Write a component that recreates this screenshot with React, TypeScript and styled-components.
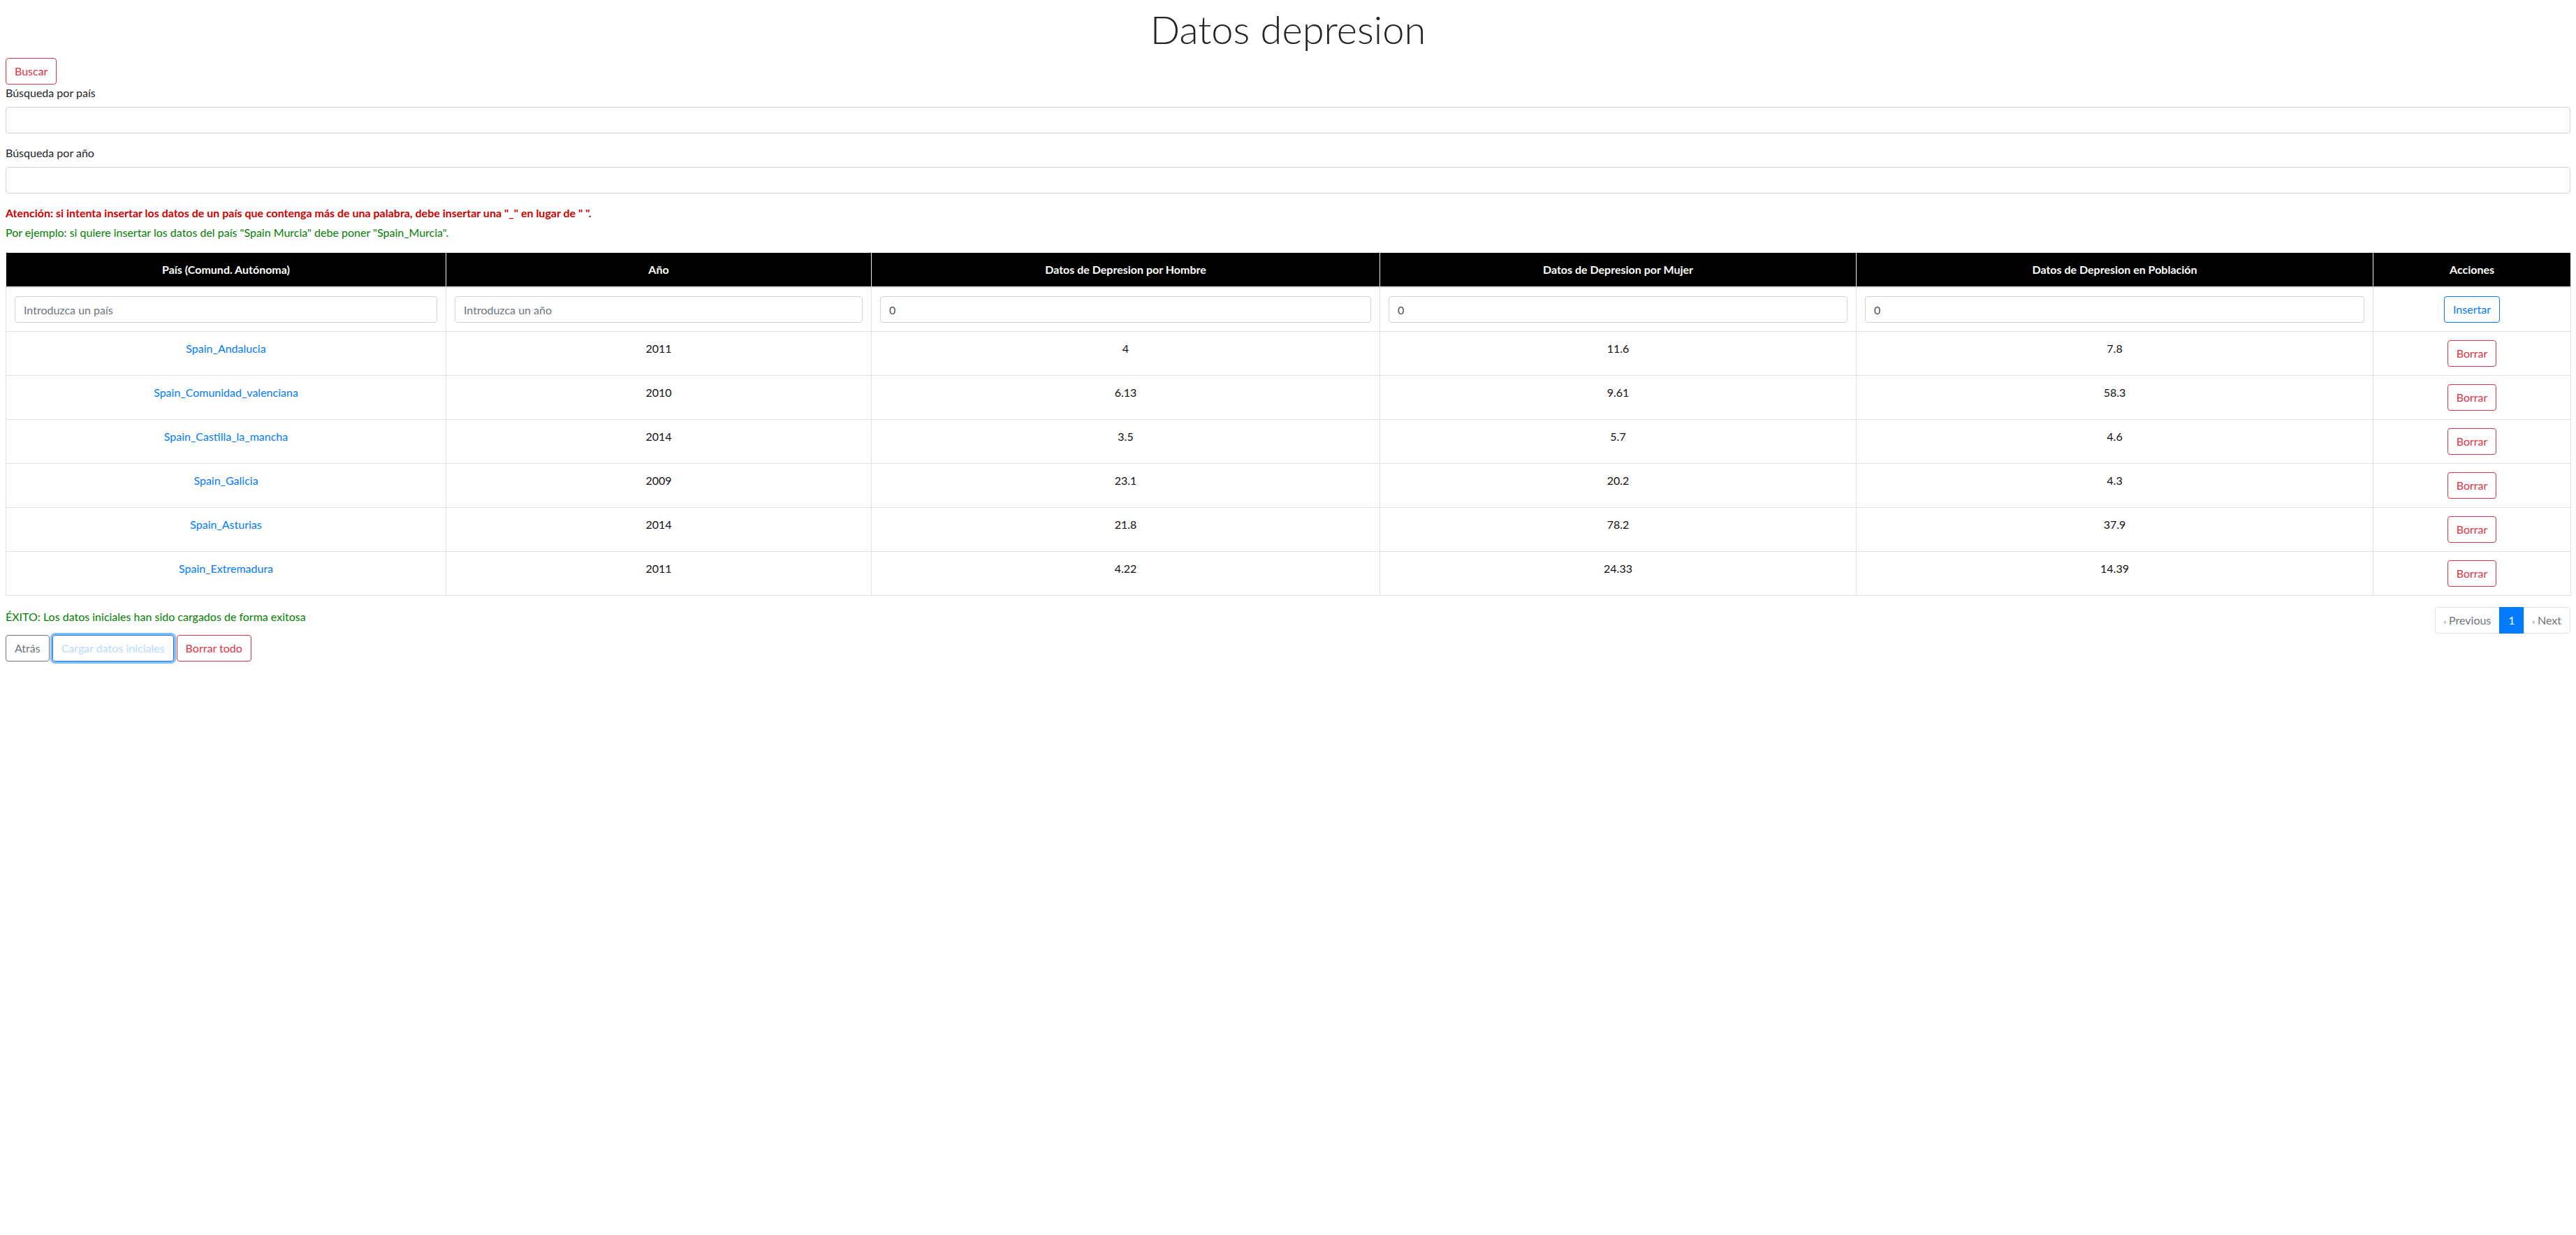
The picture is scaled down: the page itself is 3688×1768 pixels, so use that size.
import React from "react";
import styled, { createGlobalStyle, css } from "styled-components";

const FONT = `"Lato", "Segoe UI", "Liberation Sans", sans-serif`;

type Row = {
  country: string;
  year: number;
  men: string;
  women: string;
  population: string;
};

const ROWS: Row[] = [
  { country: "Spain_Andalucia", year: 2011, men: "4", women: "11.6", population: "7.8" },
  { country: "Spain_Comunidad_valenciana", year: 2010, men: "6.13", women: "9.61", population: "58.3" },
  { country: "Spain_Castilla_la_mancha", year: 2014, men: "3.5", women: "5.7", population: "4.6" },
  { country: "Spain_Galicia", year: 2009, men: "23.1", women: "20.2", population: "4.3" },
  { country: "Spain_Asturias", year: 2014, men: "21.8", women: "78.2", population: "37.9" },
  { country: "Spain_Extremadura", year: 2011, men: "4.22", women: "24.33", population: "14.39" },
];

const HEADERS = [
  "País (Comund. Autónoma)",
  "Año",
  "Datos de Depresion por Hombre",
  "Datos de Depresion por Mujer",
  "Datos de Depresion en Población",
  "Acciones",
];

const COL_WIDTHS = [630, 609, 728, 682, 740, 283];

const GlobalStyle = createGlobalStyle`
  html, body {
    margin: 0;
    background: #fff;
  }
  body {
    font-family: ${FONT};
    font-size: 16px;
    line-height: 1.5;
    color: #212529;
  }
  * {
    box-sizing: border-box;
  }
`;

const Page = styled.main`
  padding: 8px;
  width: 3688px;
`;

const Title = styled.h1`
  margin: 0 0 8px;
  font-size: 56px;
  font-weight: 300;
  line-height: 1.2;
  text-align: center;
  color: #212529;
`;

type Variant = "danger" | "primary" | "secondary";

const VARIANT_COLORS: Record<Variant, string> = {
  danger: "#dc3545",
  primary: "#007bff",
  secondary: "#6c757d",
};

const OutlineButton = styled.button<{ $variant: Variant; $focused?: boolean }>`
  display: inline-block;
  font-family: ${FONT};
  font-size: 16px;
  line-height: 1.5;
  padding: 6px 12px;
  border-radius: 4px;
  background: transparent;
  cursor: pointer;
  color: ${({ $variant }) => VARIANT_COLORS[$variant]};
  border: 1px solid ${({ $variant }) => VARIANT_COLORS[$variant]};
  ${({ $focused }) =>
    $focused &&
    css`
      color: #b8d9ff;
      border-color: #1f74d6;
      box-shadow: 0 0 0 3px rgba(0, 123, 255, 0.5);
    `}
`;

const FormGroup = styled.div`
  margin-bottom: 16px;
`;

const Label = styled.label`
  display: block;
  margin-bottom: 8px;
`;

const TextInput = styled.input`
  display: block;
  width: 100%;
  height: 38px;
  padding: 6px 12px;
  font-family: ${FONT};
  font-size: 16px;
  line-height: 1.5;
  color: #495057;
  background: #fff;
  border: 1px solid #ced4da;
  border-radius: 4px;
  &::placeholder {
    color: #6c757d;
  }
`;

const Notice = styled.p<{ $tone: "warning" | "success"; $bold?: boolean }>`
  margin: 0 0 4px;
  color: ${({ $tone }) => ($tone === "warning" ? "#d10000" : "#008000")};
  font-weight: ${({ $bold }) => ($bold ? 700 : 400)};
`;

const Table = styled.table`
  width: 100%;
  margin-top: 16px;
  border-collapse: collapse;
  table-layout: fixed;
  border: 1px solid #dee2e6;
`;

const HeadCell = styled.th`
  padding: 12px;
  background: #000;
  color: #fff;
  font-weight: 700;
  text-align: center;
  vertical-align: bottom;
  border: 1px solid #e9ecef;
  border-bottom: 2px solid #dee2e6;
`;

const Cell = styled.td`
  padding: 12px;
  text-align: center;
  vertical-align: top;
  color: #111;
  border: 1px solid #dee2e6;
`;

const CountryLink = styled.a`
  color: #007bff;
  text-decoration: none;
`;

const FooterRow = styled.div`
  display: flex;
  justify-content: space-between;
  align-items: flex-start;
  margin-top: 16px;
`;

const SuccessText = styled.p`
  margin: 0;
  padding-top: 2px;
  color: #008000;
`;

const Pagination = styled.ul`
  display: flex;
  list-style: none;
  margin: 0;
  padding: 0;
`;

const PageLink = styled.li<{ $active?: boolean; $first?: boolean; $last?: boolean }>`
  padding: 8px 12px;
  line-height: 1.25;
  margin-left: -1px;
  border: 1px solid ${({ $active }) => ($active ? "#007bff" : "#dee2e6")};
  background: ${({ $active }) => ($active ? "#007bff" : "#fff")};
  color: ${({ $active }) => ($active ? "#fff" : "#6c757d")};
  border-radius: ${({ $first, $last }) =>
    $first ? "4px 0 0 4px" : $last ? "0 4px 4px 0" : "0"};
`;

const Chevron = styled.span`
  font-size: 12px;
  margin-right: 4px;
`;

const ButtonRow = styled.div`
  display: flex;
  gap: 4px;
  margin-top: 2px;
`;

const App: React.FC = () => (
  <>
    <GlobalStyle />
    <Page>
      <Title>Datos depresion</Title>
      <OutlineButton $variant="danger" type="button">
        Buscar
      </OutlineButton>
      <FormGroup>
        <Label>Búsqueda por país</Label>
        <TextInput type="text" />
      </FormGroup>
      <FormGroup>
        <Label>Búsqueda por año</Label>
        <TextInput type="text" />
      </FormGroup>
      <Notice $tone="warning" $bold>
        Atención: si intenta insertar los datos de un país que contenga más de una palabra, debe
        insertar una "_" en lugar de " ".
      </Notice>
      <Notice $tone="success">
        Por ejemplo: si quiere insertar los datos del país "Spain Murcia" debe poner "Spain_Murcia".
      </Notice>

      <Table>
        <colgroup>
          {COL_WIDTHS.map((w, i) => (
            <col key={i} style={{ width: w }} />
          ))}
        </colgroup>
        <thead>
          <tr>
            {HEADERS.map((h) => (
              <HeadCell key={h}>{h}</HeadCell>
            ))}
          </tr>
        </thead>
        <tbody>
          <tr>
            <Cell>
              <TextInput type="text" placeholder="Introduzca un país" />
            </Cell>
            <Cell>
              <TextInput type="text" placeholder="Introduzca un año" />
            </Cell>
            <Cell>
              <TextInput type="text" defaultValue="0" />
            </Cell>
            <Cell>
              <TextInput type="text" defaultValue="0" />
            </Cell>
            <Cell>
              <TextInput type="text" defaultValue="0" />
            </Cell>
            <Cell>
              <OutlineButton $variant="primary" type="button">
                Insertar
              </OutlineButton>
            </Cell>
          </tr>
          {ROWS.map((row) => (
            <tr key={row.country}>
              <Cell>
                <CountryLink href="#">{row.country}</CountryLink>
              </Cell>
              <Cell>{row.year}</Cell>
              <Cell>{row.men}</Cell>
              <Cell>{row.women}</Cell>
              <Cell>{row.population}</Cell>
              <Cell>
                <OutlineButton $variant="danger" type="button">
                  Borrar
                </OutlineButton>
              </Cell>
            </tr>
          ))}
        </tbody>
      </Table>

      <FooterRow>
        <SuccessText>ÉXITO: Los datos iniciales han sido cargados de forma exitosa</SuccessText>
        <Pagination>
          <PageLink $first>
            <Chevron>‹</Chevron>Previous
          </PageLink>
          <PageLink $active>1</PageLink>
          <PageLink $last>
            <Chevron>›</Chevron>Next
          </PageLink>
        </Pagination>
      </FooterRow>

      <ButtonRow>
        <OutlineButton $variant="secondary" type="button">
          Atrás
        </OutlineButton>
        <OutlineButton $variant="primary" $focused type="button">
          Cargar datos iniciales
        </OutlineButton>
        <OutlineButton $variant="danger" type="button">
          Borrar todo
        </OutlineButton>
      </ButtonRow>
    </Page>
  </>
);

export default App;
